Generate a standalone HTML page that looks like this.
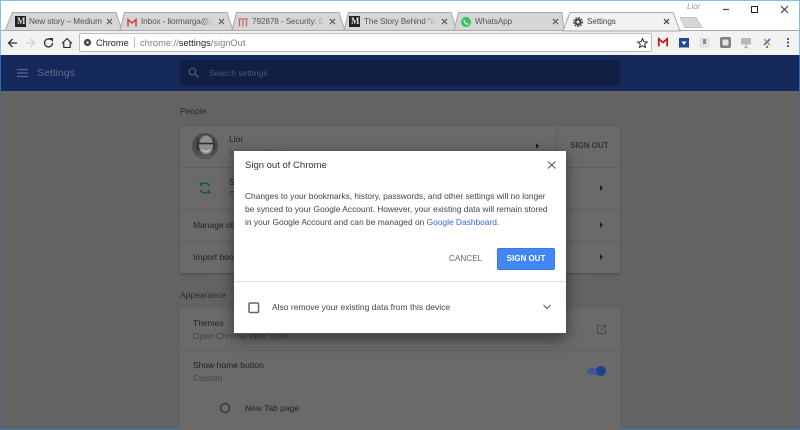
<!DOCTYPE html>
<html><head><meta charset="utf-8"><style>
*{box-sizing:border-box}
html,body{margin:0;padding:0}
body{width:800px;height:430px;overflow:hidden;position:relative;background:#636363;font-family:"Liberation Sans",sans-serif;font-size:9px;color:#222}
.a{position:absolute;white-space:nowrap}
.l{position:absolute;white-space:nowrap;line-height:12px}
.t{position:absolute;white-space:nowrap;line-height:12px;top:16px;font-size:8.2px;letter-spacing:-.1px;color:#555;overflow:hidden;width:72px;-webkit-mask-image:linear-gradient(to right,#000 85%,transparent)}
.sep{position:absolute;height:1px;background:#5f5f5f}
.tri{position:absolute;width:0;height:0;border-left:3px solid #222;border-top:3px solid transparent;border-bottom:3px solid transparent}
</style></head><body>
<!-- Window chrome -->
<div class="a" style="left:0;top:0;width:800px;height:31px;background:#fff"></div>
<div class="a" style="left:0;top:31px;width:800px;height:24px;background:#f2f2f2"></div>
<svg class="a" style="left:0;top:0" width="800" height="56" viewBox="0 0 800 56">
<path d="M0 30.500 H800" stroke="#a8a8a8" fill="none"/>
<g fill="#d6d6d6" stroke="#a8a8a8" stroke-width="1">
<path d="M5 30.500 L12.500 12.500 H116 L122 30.500 Z"/>
<path d="M120 30.500 L124.500 12.500 H227 L233 30.500 Z"/>
<path d="M232 30.500 L236.500 12.500 H339 L345 30.500 Z"/>
<path d="M344 30.500 L348.500 12.500 H451 L457 30.500 Z"/>
<path d="M454 30.500 L458.500 12.500 H562 L564 30.500 Z"/>
<path d="M680 17.500 H696 L702 27.500 H685 Z" stroke="#c4c4c4"/>
<path d="M563 31 L570 12.500 H673 L680 31 Z" fill="#f2f2f2"/>
</g>
<!-- M favicons -->
<rect x="15" y="16" width="11" height="11" fill="#222"/>
<rect x="349" y="16" width="11" height="11" fill="#222"/>
<!-- Gmail -->
<path d="M128 26.500 V19.500 L132 23 L136 19.500 V26.500" fill="none" stroke="#d0453a" stroke-width="1.500"/>
<!-- calendar favicon -->
<path d="M238 19 H248 M239.500 20 V26.500 M243 20 V26.500 M246.500 20 V26.500" stroke="#c56a6a" stroke-width="1.300" fill="none"/>
<!-- WhatsApp -->
<circle cx="466" cy="22" r="5" fill="#2fc65c"/>
<path d="M464 20 C464.500 23 466.500 24.500 468.500 24" stroke="#fff" stroke-width="1.300" fill="none"/>
<!-- Gear -->
<circle cx="578" cy="22" r="2.500" fill="none" stroke="#444" stroke-width="2"/>
<circle cx="578" cy="22" r="4.300" fill="none" stroke="#444" stroke-width="1.300" stroke-dasharray="1.700 1.200"/>
<!-- tab closes -->
<g stroke="#555" stroke-width="1.100" fill="none">
<path d="M107 19 L112 24 M112 19 L107 24"/>
<path d="M219 19 L224 24 M224 19 L219 24"/>
<path d="M330 19 L335 24 M335 19 L330 24"/>
<path d="M442 19 L447 24 M447 19 L442 24"/>
<path d="M553 19 L558 24 M558 19 L553 24"/>
<path d="M664 19 L669 24 M669 19 L664 24" stroke="#333"/>
</g>
<!-- window controls -->
<path d="M723 9.500 H729" stroke="#444" stroke-width="1.200"/>
<rect x="751.500" y="6.500" width="6" height="6" fill="none" stroke="#222" stroke-width="1"/>
<path d="M781 6 L788 13 M788 6 L781 13" stroke="#333" stroke-width="1"/>
<!-- nav icons -->
<path d="M17 43 H8.500 M12.500 39 L8.500 43 L12.500 47" stroke="#333" stroke-width="1.300" fill="none"/>
<path d="M26 43 H34.500 M30.500 39 L34.500 43 L30.500 47" stroke="#cfcfcf" stroke-width="1.300" fill="none"/>
<path d="M52.500 43 A4 4 0 1 1 51 39.800" stroke="#333" stroke-width="1.300" fill="none"/>
<path d="M49 38 H53 V42 Z" fill="#333"/>
<path d="M62 43.500 L67 38.500 L72 43.500 M63.800 42.500 V47.500 H70.200 V42.500" stroke="#222" stroke-width="1.100" fill="none"/>
<!-- omnibox -->
<rect x="79.500" y="33.500" width="572" height="18" rx="1.500" fill="#fff" stroke="#bdbdbd"/>
<circle cx="87.500" cy="42.500" r="3.600" fill="#444"/>
<circle cx="87.500" cy="42.500" r="1.300" fill="#ddd"/>
<path d="M134.500 37 V48" stroke="#bbb"/>
<!-- star -->
<path d="M642.500 38.500 L643.900 41.700 L647.300 42 L644.700 44.200 L645.500 47.500 L642.500 45.700 L639.500 47.500 L640.300 44.200 L637.700 42 L641.100 41.700 Z" fill="none" stroke="#333" stroke-width="1"/>
<!-- extensions -->
<rect x="658" y="38" width="10" height="8.500" fill="#f4f4f4"/>
<path d="M658.800 46.500 V38.800 L663 42.500 L667.200 38.800 V46.500" fill="none" stroke="#c8161d" stroke-width="1.700"/>
<rect x="679" y="38" width="10" height="9.500" fill="#24498f"/>
<path d="M681.500 41.500 H686.500 L684 45 Z" fill="#fff"/>
<rect x="699.500" y="37.500" width="10" height="10" fill="#e2e2e2"/>
<rect x="703" y="39" width="3" height="5" fill="#8a8a8a"/>
<rect x="720" y="37" width="11" height="11" rx="2" fill="#7f7f7f"/>
<rect x="722.500" y="39.500" width="6" height="6" rx="1" fill="#e6e6e6"/>
<rect x="741" y="38" width="10" height="6.500" fill="#b8b8b8"/>
<path d="M744 47.500 H748 M746 44.500 V47.500" stroke="#b8b8b8" stroke-width="1.500"/>
<path d="M764 39 L770 45" stroke="#e9a13b" stroke-width="1.800"/>
<path d="M770 39 L764 45" stroke="#4178d8" stroke-width="1.800"/>
<path d="M767 46 L767 48" stroke="#d9442f" stroke-width="1.800"/>
<circle cx="788" cy="39" r="1" fill="#333"/><circle cx="788" cy="42.500" r="1" fill="#333"/><circle cx="788" cy="46" r="1" fill="#333"/>
</svg>
<div class="l" style="left:17px;top:15px;color:#ddd;font:bold 9px/13px 'Liberation Serif',serif">M</div>
<div class="l" style="left:351px;top:15px;color:#ddd;font:bold 9px/13px 'Liberation Serif',serif">M</div>
<div class="t" style="left:29px;width:74px;-webkit-mask-image:none">New story – Medium</div>
<div class="t" style="left:141px">Inbox - liormarga@gmail.com</div>
<div class="t" style="left:252px">792878 - Security: Egress</div>
<div class="t" style="left:364px">The Story Behind "an unusual</div>
<div class="t" style="left:475px;-webkit-mask-image:none">WhatsApp</div>
<div class="t" style="left:587px;color:#444;-webkit-mask-image:none">Settings</div>
<div class="l" style="left:687px;top:1px;color:#999;font-size:8px;font-style:italic">Lior</div>
<div class="l" style="left:96px;top:37px;font-size:9.200px;color:#222">Chrome</div>
<div class="l" style="left:140px;top:37px;font-size:9.300px;color:#808080">chrome://<span style="color:#222">settings</span>/signOut</div>
<!-- Header -->
<div class="a" style="left:1px;top:55px;width:798px;height:36px;background:#14285a"></div>
<div class="a" style="left:180px;top:60px;width:440px;height:26px;background:#101f42"></div>
<svg class="a" style="left:0;top:55px" width="210" height="36">
<path d="M17 14.500 H28 M17 18 H28 M17 21.500 H28" stroke="#5b6884" stroke-width="1.300"/>
<circle cx="192.500" cy="16.500" r="3.300" fill="none" stroke="#4f5a74" stroke-width="1.200"/>
<path d="M195 19 L198.500 22.500" stroke="#4f5a74" stroke-width="1.300"/>
</svg>
<div class="l" style="left:37px;top:67px;color:#5f6c87;font-size:10.500px">Settings</div>
<div class="l" style="left:209px;top:67px;color:#4f5a74;font-size:8.500px">Search settings</div>
<!-- Left/right edges -->
<div class="a" style="left:0;top:0;width:800px;height:1px;background:#86bde8"></div>
<div class="a" style="left:0;top:0;width:1px;height:55px;background:#86bde8"></div>
<div class="a" style="left:799px;top:0;width:1px;height:55px;background:#86bde8"></div>
<div class="a" style="left:0;top:55px;width:1px;height:36px;background:#2f6fb0"></div>
<div class="a" style="left:799px;top:55px;width:1px;height:36px;background:#2f6fb0"></div>
<div class="a" style="left:0;top:91px;width:1px;height:339px;background:#4a6a80"></div>
<div class="a" style="left:799px;top:91px;width:1px;height:339px;background:#4a6a80"></div>
<div class="a" style="left:0;top:429px;width:800px;height:1px;background:#3f7ba8"></div>
<!-- People card -->
<div class="l" style="left:180px;top:105px;font-size:8.500px;color:#2c2c2c">People</div>
<div class="a" style="left:180px;top:126px;width:440px;height:147px;background:#6a6a6a;box-shadow:0 1px 2px #4a4a4a"></div>
<div class="sep" style="left:180px;top:167px;width:440px"></div>
<div class="sep" style="left:180px;top:209px;width:440px"></div>
<div class="sep" style="left:180px;top:241px;width:440px"></div>
<div class="a" style="left:556px;top:126px;width:1px;height:41px;background:#5f5f5f"></div>
<svg class="a" style="left:190px;top:131px" width="30" height="80">
<circle cx="15" cy="15" r="13" fill="#4c4c4c"/>
<ellipse cx="16" cy="14" rx="7" ry="9.500" fill="#8e8e8e"/>
<path d="M9 9 Q8 15 10 19 L7 19 Q5 11 9 7 Z" fill="#333"/>
<path d="M23 9 Q24 15 22.500 19 L25 18 Q26 11 23 7 Z" fill="#333"/>
<path d="M9 12.500 H23" stroke="#2a2a2a" stroke-width="1.600"/>
<path d="M12 19 Q16 22 20 19" stroke="#bcbcbc" stroke-width="1.500" fill="none"/>
<path d="M7 25 Q15 21 24 25 L21 28 H10 Z" fill="#5a5a5a"/>
<path d="M19.700 55.300 A5 5 0 0 0 11.200 53.800" fill="none" stroke="#0d5c34" stroke-width="1.400"/>
<path d="M9 51.500 L13 52 L11.500 56 Z" fill="#0d5c34"/>
<path d="M10.300 58.700 A5 5 0 0 0 18.800 60.200" fill="none" stroke="#0d5c34" stroke-width="1.400"/>
<path d="M21 62.500 L17 62 L18.500 58 Z" fill="#0d5c34"/>
</svg>
<div class="l" style="left:229px;top:133px;font-size:8.500px;color:#222">Lior</div>
<div class="l" style="left:229px;top:146px;font-size:8.500px;color:#3c4f7d">liormarga@gmail.com</div>
<div class="l" style="left:229px;top:176px;font-size:8.500px;color:#222">Sync</div>
<div class="l" style="left:229px;top:188px;font-size:8.500px;color:#444">On</div>
<div class="l" style="left:193px;top:219px;font-size:8.500px;color:#222">Manage other people</div>
<div class="l" style="left:193px;top:251px;font-size:8.500px;color:#222">Import bookmarks and settings</div>
<div class="l" style="left:570px;top:140px;font-size:8px;font-weight:bold;color:#333">SIGN OUT</div>
<div class="tri" style="left:536px;top:143px"></div>
<div class="tri" style="left:600px;top:185px"></div>
<div class="tri" style="left:600px;top:222px"></div>
<div class="tri" style="left:600px;top:254px"></div>
<!-- Appearance card -->
<div class="l" style="left:180px;top:289px;font-size:8.500px;color:#2c2c2c">Appearance</div>
<div class="a" style="left:180px;top:309px;width:440px;height:121px;background:#6a6a6a"></div>
<div class="sep" style="left:180px;top:350px;width:440px"></div>
<div class="l" style="left:193px;top:317px;font-size:8.500px;color:#222">Themes</div>
<div class="l" style="left:193px;top:330px;font-size:8.500px;color:#444">Open Chrome Web Store</div>
<div class="l" style="left:193px;top:359px;font-size:8.500px;color:#222">Show home button</div>
<div class="l" style="left:193px;top:372px;font-size:8.500px;color:#444">Custom</div>
<div class="l" style="left:245px;top:402px;font-size:8.500px;color:#222">New Tab page</div>
<svg class="a" style="left:210px;top:320px" width="400" height="100">
<path d="M391 5.500 H387.500 V13.500 H395.500 V10 M391 10 L395.500 5.500 M392.500 5.500 H395.500 V8.500" fill="none" stroke="#4b4b4b" stroke-width="1"/>
<circle cx="15" cy="88" r="4.500" fill="none" stroke="#2f2f2f" stroke-width="1.200"/>
<rect x="377" y="48" width="19" height="7" rx="3.500" fill="#40598f"/>
<circle cx="391" cy="51" r="5" fill="#1c418e"/>
</svg>
<!-- Dialog -->
<div class="a" style="left:234px;top:151px;width:332px;height:183px;background:#fff;border-bottom:1px solid #555;box-shadow:0 4px 14px rgba(0,0,0,.5)"></div>
<div class="a" style="left:234px;top:281px;width:332px;height:1px;background:#e2e2e2"></div>
<div class="l" style="left:245px;top:159px;font-size:9.500px;line-height:14px;color:#333">Sign out of Chrome</div>
<svg class="a" style="left:546px;top:159px" width="12" height="12"><path d="M2 2.500 L9.500 9.500 M9.500 2.500 L2 9.500" stroke="#555" stroke-width="1"/></svg>
<div class="l" style="left:245px;top:190px;font-size:8.400px;line-height:13px;color:#444;width:315px;white-space:normal">Changes to your bookmarks, history, passwords, and other settings will no longer<br>be synced to your Google Account. However, your existing data will remain stored<br>in your Google Account and can be managed on <span style="color:#3367d6">Google Dashboard</span>.</div>
<div class="l" style="left:449px;top:253px;font-size:8.200px;color:#666">CANCEL</div>
<div class="a" style="left:497px;top:248px;width:58px;height:22px;background:#4285f4;border:1px solid #3a78e0;border-radius:2px;color:#fff;font-size:8px;font-weight:bold;line-height:20px;text-align:center">SIGN OUT</div>
<svg class="a" style="left:247px;top:301px" width="13" height="13"><rect x="2" y="2" width="9.500" height="9.500" rx="1" fill="none" stroke="#666" stroke-width="1.500"/></svg>
<div class="l" style="left:272px;top:301px;font-size:8.500px;color:#444">Also remove your existing data from this device</div>
<svg class="a" style="left:541px;top:303px" width="12" height="9"><path d="M2.500 2 L6 5.500 L9.500 2" fill="none" stroke="#555" stroke-width="1.100"/></svg>
</body></html>
